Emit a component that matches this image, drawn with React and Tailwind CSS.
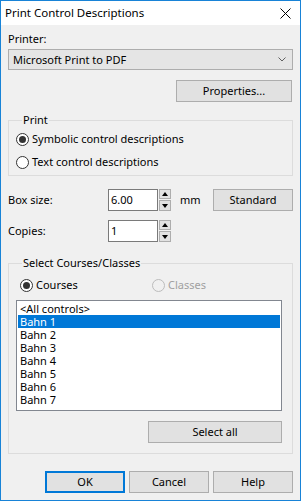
import React from "react";

const font = { fontFamily: '"Noto Sans", "Open Sans", sans-serif' };

function Radio({ checked, disabled, label }) {
  return (
    <div className="flex h-[16px] items-center gap-[3px]">
      <span
        className={
          "flex h-[13px] w-[13px] items-center justify-center rounded-full border " +
          (disabled ? "border-[#bcbcbc] bg-[#f0f0f0]" : "border-[#333333] bg-white")
        }
      >
        {checked ? <span className="h-[7px] w-[7px] rounded-full bg-[#333333]" /> : null}
      </span>
      <span className={disabled ? "text-[#a0a0a0]" : "text-black"}>{label}</span>
    </div>
  );
}

function Button({ children, width, primary }) {
  return (
    <button
      type="button"
      className={
        "flex h-[22px] items-center justify-center bg-[#e1e1e1] text-black " +
        (primary ? "border-2 border-[#0078d7]" : "border border-[#adadad]")
      }
      style={{ width }}
    >
      {children}
    </button>
  );
}

function Spinner() {
  return (
    <div className="ml-[1px] flex h-[22px] w-[12px] flex-col gap-[1px]">
      <div className="flex h-[10px] items-center justify-center border border-[#adadad] bg-[#e1e1e1]">
        <svg width="6" height="4" viewBox="0 0 6 4">
          <path d="M0 4 L3 0 L6 4 Z" fill="#000" />
        </svg>
      </div>
      <div className="flex h-[11px] items-center justify-center border border-[#adadad] bg-[#e1e1e1]">
        <svg width="6" height="4" viewBox="0 0 6 4">
          <path d="M0 0 L3 4 L6 0 Z" fill="#000" />
        </svg>
      </div>
    </div>
  );
}

const courses = ["<All controls>", "Bahn 1", "Bahn 2", "Bahn 3", "Bahn 4", "Bahn 5", "Bahn 6", "Bahn 7"];

export default function App() {
  return (
    <div
      className="flex h-[501px] w-[301px] flex-col border border-[#1883d7] bg-[#f0f0f0] text-[11px] leading-[16px] text-black"
      style={font}
    >
      <div className="flex h-[24px] shrink-0 items-center justify-between bg-white pl-[4px] pr-[9px] text-[11.5px]">
        <span>Print Control Descriptions</span>
        <svg width="11" height="11" viewBox="0 0 11 11">
          <path d="M0.5 0.5 L10.5 10.5 M10.5 0.5 L0.5 10.5" stroke="#000" strokeWidth="1" />
        </svg>
      </div>

      <div className="flex flex-col px-[7px]">
        <div className="mt-[6px]">Printer:</div>
        <div className="mt-[2px] flex h-[21px] items-center justify-between border border-[#adadad] bg-[#e5e5e5] pl-[4px] pr-[6px]">
          <span>Microsoft Print to PDF</span>
          <svg width="8" height="5" viewBox="0 0 8 5">
            <path d="M0.5 0.5 L4 4 L7.5 0.5" stroke="#606060" fill="none" strokeWidth="1" />
          </svg>
        </div>
        <div className="mt-[10px] flex justify-end pr-[1px]">
          <Button width="116px">Properties...</Button>
        </div>

        <fieldset className="mt-[10px] border border-[#dcdcdc] pb-[5px] pl-[7px]">
          <legend className="ml-[6px] px-[1px]">Print</legend>
          <div className="mt-[3px]">
            <Radio checked label="Symbolic control descriptions" />
          </div>
          <div className="mt-[7px]">
            <Radio label="Text control descriptions" />
          </div>
        </fieldset>

        <div className="mt-[13px] flex items-center">
          <span className="w-[100px]">Box size:</span>
          <div className="flex h-[22px] w-[50px] items-center border border-[#7a7a7a] bg-white pl-[2px]">6.00</div>
          <Spinner />
          <span className="ml-[9px]">mm</span>
          <div className="ml-auto">
            <Button width="80px">Standard</Button>
          </div>
        </div>

        <div className="mt-[9px] flex items-center">
          <span className="w-[100px]">Copies:</span>
          <div className="flex h-[22px] w-[50px] items-center border border-[#7a7a7a] bg-white pl-[2px]">1</div>
          <Spinner />
        </div>

        <fieldset className="mt-[13px] border border-[#dcdcdc] pb-[10px] pl-[7px] pr-[10px]">
          <legend className="ml-[6px] px-[1px]">Select Courses/Classes</legend>
          <div className="mt-[6px] flex pl-[4px]">
            <div className="w-[132px]">
              <Radio checked label="Courses" />
            </div>
            <Radio disabled label="Classes" />
          </div>
          <div className="mt-[7px] flex h-[111px] w-[266px] flex-col overflow-hidden border border-[#828790] bg-white px-[1px] pt-[1px] leading-[13px]">
            {courses.map((c, i) => (
              <div
                key={c}
                className={"h-[13px] shrink-0 pl-[2px] " + (i === 1 ? "bg-[#0078d7] text-white" : "")}
              >
                {c}
              </div>
            ))}
          </div>
          <div className="mt-[10px] flex justify-end">
            <Button width="134px">Select all</Button>
          </div>
        </fieldset>

        <div className="mt-[17px] flex justify-end gap-[4px]">
          <Button width="80px" primary>OK</Button>
          <Button width="80px">Cancel</Button>
          <Button width="80px">Help</Button>
        </div>
      </div>
    </div>
  );
}
